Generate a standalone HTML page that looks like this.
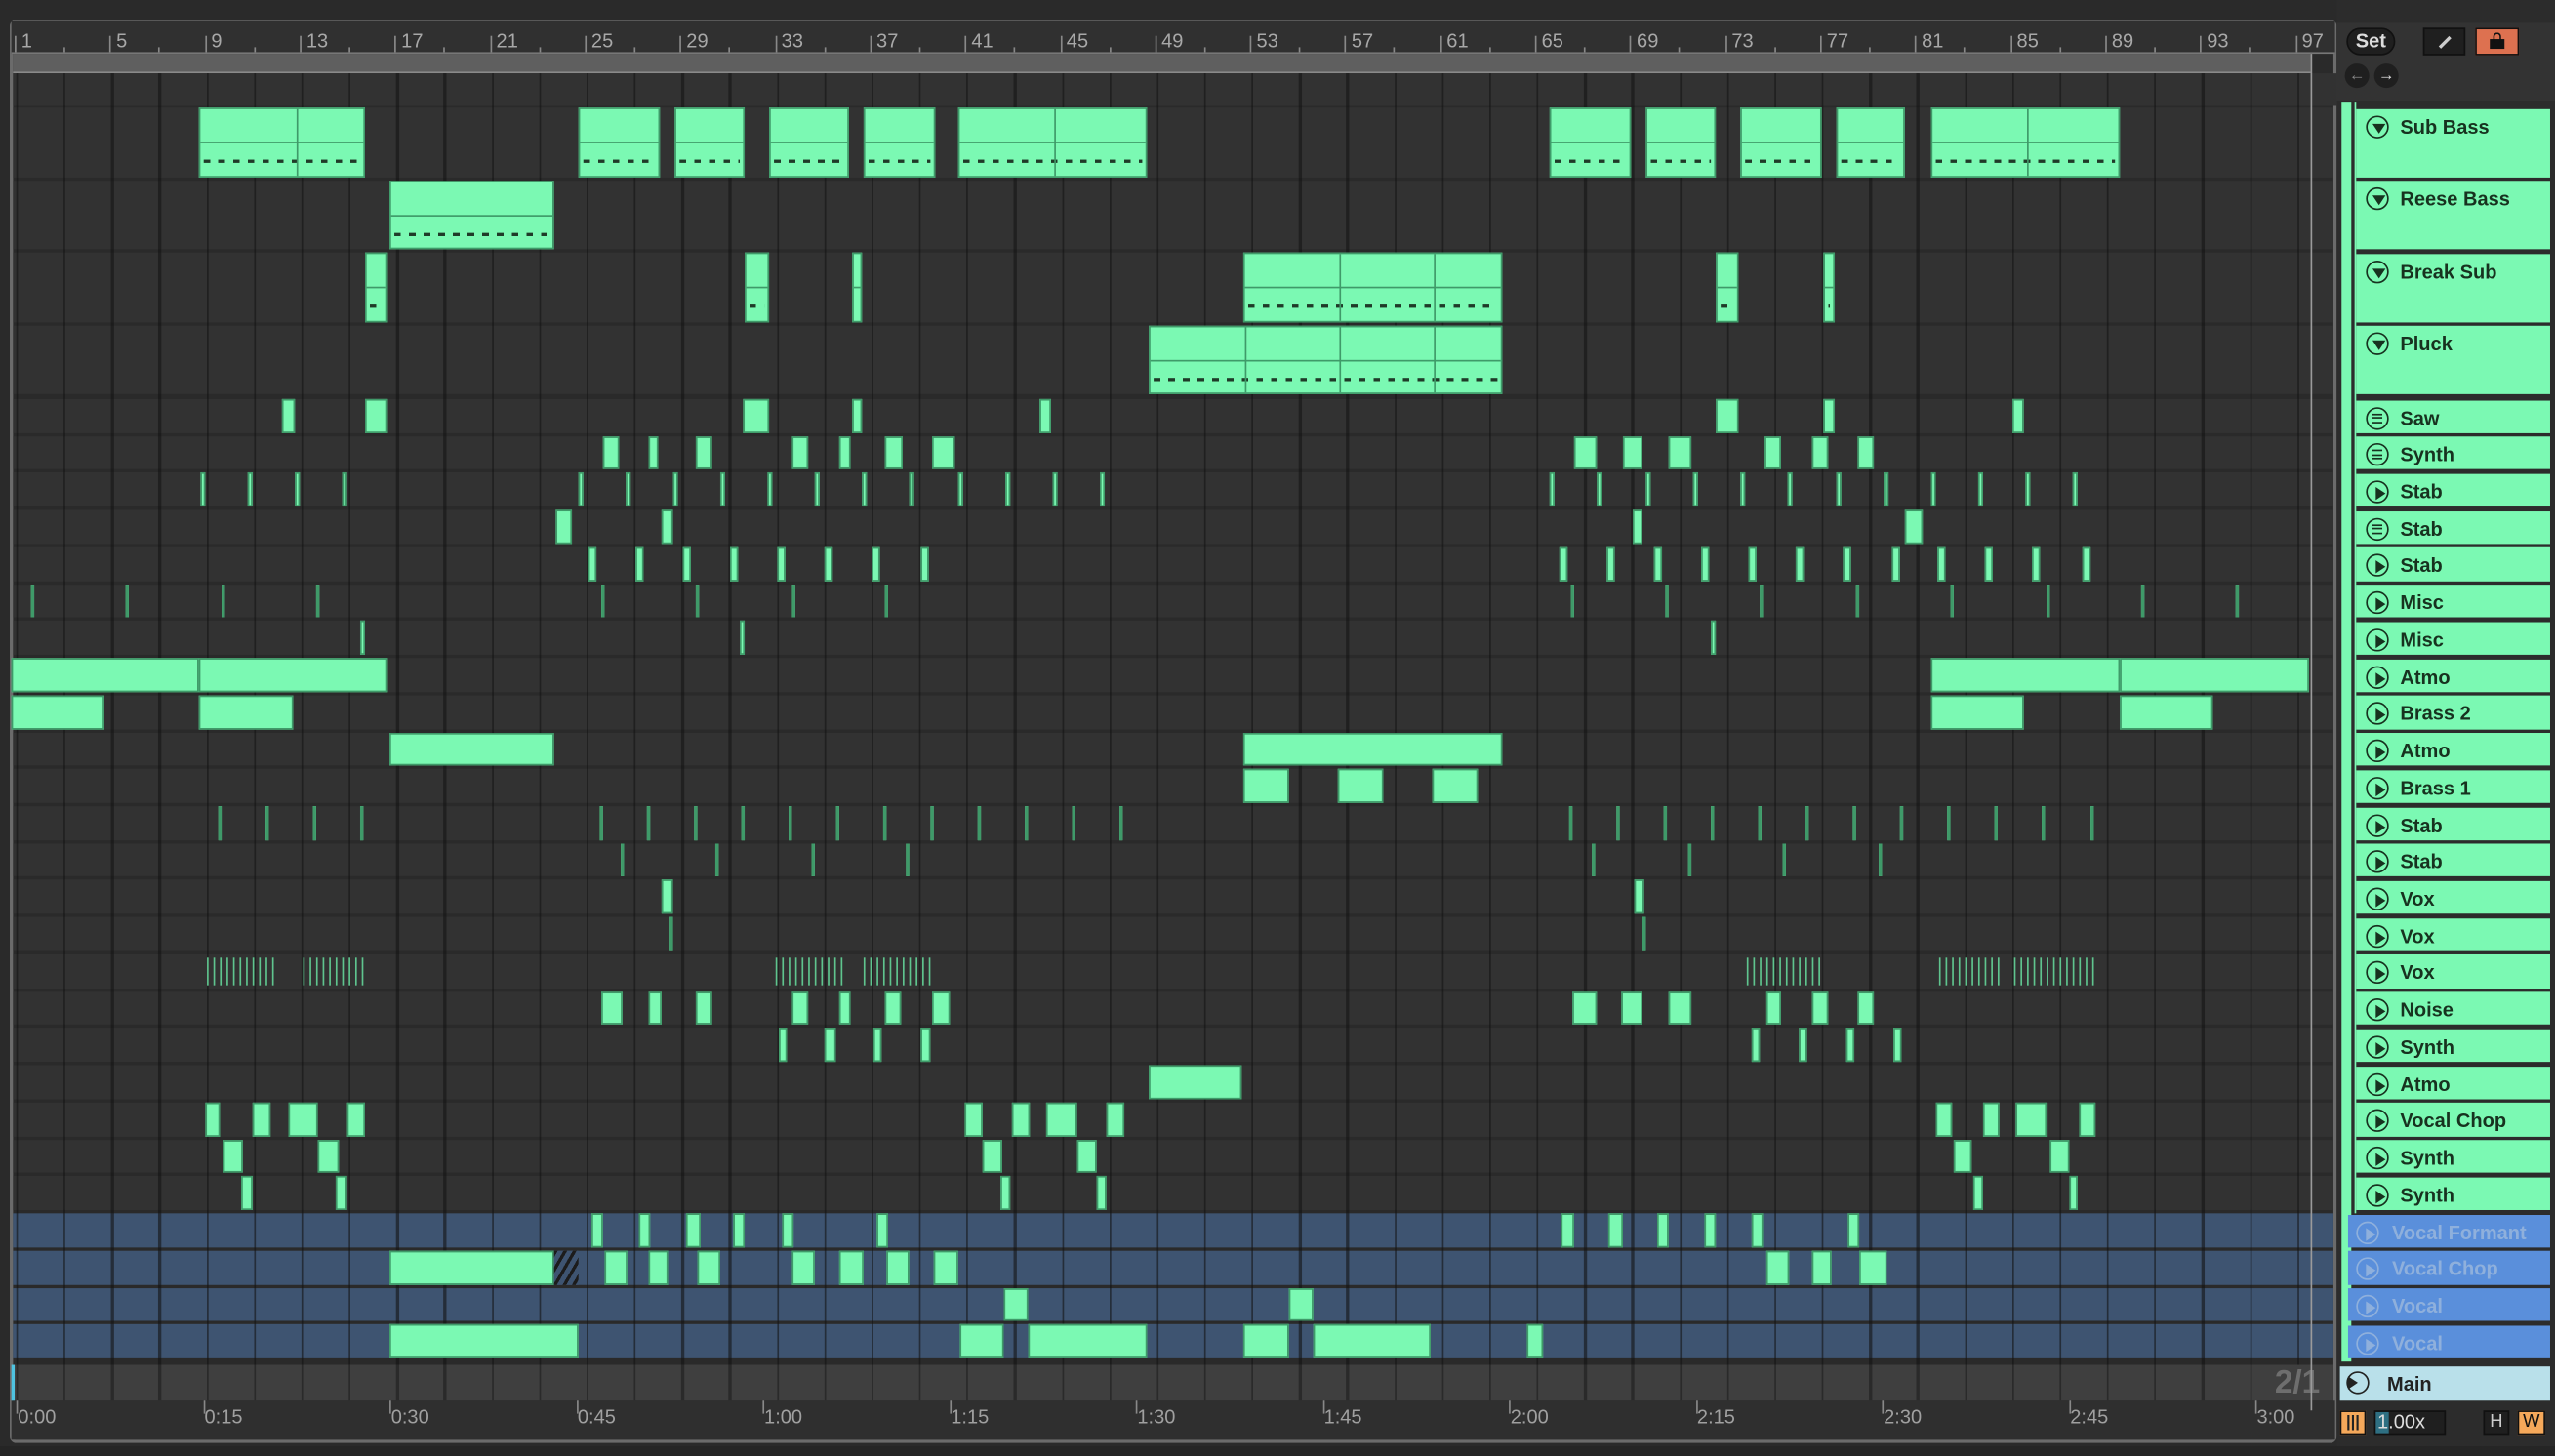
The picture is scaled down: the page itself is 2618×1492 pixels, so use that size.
<!DOCTYPE html>
<html><head><meta charset="utf-8">
<style>
*{margin:0;padding:0;box-sizing:border-box}
html,body{width:2618px;height:1492px;overflow:hidden;background:#2a2a2a;font-family:"Liberation Sans","DejaVu Sans",sans-serif}
#w{position:absolute;left:0;top:0;width:1568px;height:894px;transform-origin:0 0;transform:scale(1.66964,1.66890);background:#2a2a2a}
.a{position:absolute}
.c{position:absolute;background:#7bf9b3;border:1px solid #3f9a69}
.h{position:absolute;left:1446px;width:119px;background:#7bf9b3;color:#17321f;font-weight:bold;font-size:12px}
.h .i{position:absolute;left:6px;top:4px;width:14px;height:14px;border:1.5px solid #17321f;border-radius:50%}
.h span{position:absolute;left:27px;top:4px}
.v{background:#5a8fdb;color:#8fb0dc}
.v .i{border-color:#8fb0dc}
.num{position:absolute;top:18px;font-size:12px;color:#a8a8a8}
.tm{position:absolute;top:863px;font-size:12px;color:#a0a0a0}
</style></head><body>
<div id="w">
<!-- frame -->
<div class="a" style="left:6px;top:12px;width:1428px;height:874px;border:2px solid #6b6b6b;border-radius:4px"></div>
<div class="a" style="left:7px;top:13px;width:1426px;height:20px;background:#303030"></div>
<div class="a" style="left:7px;top:32px;width:1426px;height:1px;background:#777"></div>
<div class="a" style="left:8px;top:33px;width:1410px;height:12px;background:#5f5f5f;border-bottom:1px solid #8a8a8a"></div>
<div class="a" style="left:8px;top:45px;width:1426px;height:20px;background:#323232"></div>
<div id="grid" class="a" style="left:8px;top:45px;width:1424px;height:815px"></div>
<div id="nums"></div>
<div id="rows"></div>
<div id="clips"></div>
<!-- bottom main lane -->
<div class="a" style="left:8px;top:838px;width:1424px;height:22px;background:#3f3f3f"></div>
<div class="a" style="left:1396px;top:838px;font-size:20px;font-weight:bold;color:#6e6e6e">2/1</div>
<div id="bgrid"></div>
<div class="a" style="left:7px;top:860px;width:1426px;height:24px;background:#2f2f2f"></div>
<div id="times"></div>
<div class="a" style="left:1418px;top:33px;width:1px;height:833px;background:#9a9a9a"></div>
<div class="a" style="left:7px;top:838px;width:2px;height:22px;background:#4fc3e0"></div>
<!-- right panel -->
<div class="a" style="left:1434px;top:0;width:134px;height:894px;background:#2c2c2c"></div>
<div class="a" style="left:1434px;top:14px;width:134px;height:48px;background:#333"></div>
<div class="a" style="left:1440px;top:17px;width:30px;height:17px;border-radius:9px;background:#1f1f1f;border:1px solid #111;color:#ddd;font-size:12px;font-weight:bold;text-align:center;line-height:15px">Set</div>
<div class="a" style="left:1487px;top:17px;width:26px;height:17px;background:#1f1f1f;border:1px solid #111"></div>
<div class="a" style="left:1496px;top:25px;width:9px;height:2px;background:#ccc;transform:rotate(-45deg)"></div>
<div class="a" style="left:1519px;top:17px;width:27px;height:17px;background:#dd7150;border:1px solid #111"></div>
<div class="a" style="left:1528px;top:24px;width:9px;height:6px;background:#111"></div>
<div class="a" style="left:1530px;top:20px;width:5px;height:6px;border:1.5px solid #111;border-bottom:none;border-radius:3px 3px 0 0"></div>
<div class="a" style="left:1439px;top:39px;width:15px;height:15px;border-radius:50%;background:#1f1f1f;color:#888;font-size:10px;text-align:center;line-height:15px">&#8592;</div>
<div class="a" style="left:1457px;top:39px;width:15px;height:15px;border-radius:50%;background:#1f1f1f;color:#ddd;font-size:10px;text-align:center;line-height:15px">&#8594;</div>
<div class="a" style="left:1437px;top:63px;width:6px;height:773px;background:#7bf9b3"></div>
<div class="a" style="left:1445px;top:63px;width:1px;height:682px;background:#7bf9b3"></div>
<div id="heads"></div>
<div class="h" style="left:1436px;width:129px;top:839px;height:21px;background:#b9e0ea;color:#222"><div class="i" style="left:4px;top:3px;border-color:#222"></div><span style="left:29px">Main</span></div>
<div class="a" style="left:1441px;top:845px;width:0;height:0;border-left:6px solid #222;border-top:4px solid transparent;border-bottom:4px solid transparent"></div>
<div class="a" style="left:1436px;top:866px;width:16px;height:15px;background:#f5a85a;border:1px solid #111;color:#222;font-size:10px;text-align:center;line-height:13px;font-weight:bold">|||</div>
<div class="a" style="left:1457px;top:866px;width:44px;height:15px;background:#1f1f1f;border:1px solid #111"></div>
<div class="a" style="left:1458px;top:867px;width:8px;height:13px;background:#2e6f82"></div>
<div class="a" style="left:1459px;top:866px;font-size:12px;color:#ddd;line-height:15px">1.00x</div>
<div class="a" style="left:1524px;top:866px;width:16px;height:15px;background:#1f1f1f;border:1px solid #111;color:#ccc;font-size:11px;text-align:center;line-height:13px">H</div>
<div class="a" style="left:1545px;top:866px;width:17px;height:15px;background:#f5a85a;border:1px solid #111;color:#111;font-size:11px;text-align:center;line-height:13px">W</div>
<div class="a" style="left:0;top:888px;width:1568px;height:6px;background:#252525"></div>
</div>
<script>
var W=document.getElementById('w');
function add(p,html){var d=document.getElementById(p);d.insertAdjacentHTML('beforeend',html);}
// rows
var rows=[];var y=65;for(var i=0;i<4;i++){rows.push([y,44.5]);y+=44.5;}
y=244;for(var i=0;i<26;i++){rows.push([y,22.73]);y+=22.73;}
var s='';
rows.forEach(function(r,i){var blue=i>=26;
 s+='<div class="a" style="left:8px;top:'+(r[0]+1)+'px;width:1424px;height:'+(r[1]-2)+'px;background:'+(blue?'#3e5471':'#323232')+'"></div>';});
add('rows',s);
// vertical gridlines
s='';for(var b=1;b<=99;b+=2){var x=10+(b-1)*14.58;if(x>1432)break;
 s+='<div class="a" style="left:'+x+'px;top:45px;width:1.3px;height:815px;background:rgba(20,20,20,.6)"></div>';}
document.getElementById('clips').insertAdjacentHTML('beforebegin','<div id="vl">'+s+'</div>');
// numbers
s='';for(var b=1;b<=97;b+=4){var x=10+(b-1)*14.58;s+='<div class="a" style="left:'+(x-1)+'px;top:22px;width:1px;height:10px;background:#888"></div><div class="num" style="left:'+(x+3)+'px">'+b+'</div>';
 s+='<div class="a" style="left:'+(x+29)+'px;top:29px;width:1px;height:3px;background:#888"></div>';}
add('nums',s);
// times
var tl=['0:00','0:15','0:30','0:45','1:00','1:15','1:30','1:45','2:00','2:15','2:30','2:45','3:00'];
s='';tl.forEach(function(t,i){var x=8+i*114.5;s+='<div class="a" style="left:'+(x+2)+'px;top:860px;width:1px;height:8px;background:#888"></div><div class="tm" style="left:'+(x+3)+'px">'+t+'</div>';});
add('times',s);
// clips
function big(ri,a,b,divs){var r=rows[ri];var h='<div class="c" style="left:'+a+'px;top:'+(r[0]+1)+'px;width:'+(b-a)+'px;height:'+(r[1]-2)+'px;background:#7bf9b3">';
 h+='<div class="a" style="left:0;right:0;top:'+(r[1]*0.45)+'px;height:1px;background:#3f9a69"></div>';
 h+='<div class="a" style="left:2px;right:2px;top:'+(r[1]*0.7)+'px;height:2px;background:repeating-linear-gradient(90deg,#1f3a28 0 4px,transparent 4px 9px)"></div>';
 (divs||[]).forEach(function(d){h+='<div class="a" style="left:'+(d-a)+'px;top:0;width:1px;height:100%;background:#3f9a69"></div>';});
 return h+'</div>';}
function cl(ri,a,b){var r=rows[ri];return '<div class="c" style="left:'+a+'px;top:'+(r[0]+1)+'px;width:'+Math.max(b-a,2)+'px;height:'+(r[1]-2)+'px"></div>';}
s='';
[[122,224,[181]],[355,405],[414,457],[472,521],[530,574],[588,704,[646]],[951,1001],[1010,1053],[1068,1118],[1127,1169],[1185,1301,[1243]]].forEach(function(c){s+=big(0,c[0],c[1],c[2]);});
s+=big(1,239,340);
[[224,238],[457,472],[523,529],[763,922,[821,879]],[1053,1067],[1119,1126]].forEach(function(c){s+=big(2,c[0],c[1],c[2]);});
s+=big(3,705,922,[763,821,879]);
function R(ri,list){list.forEach(function(c){s+=cl(ri,c[0],c[1]);});}
function T(ri,xs,w){xs.forEach(function(x){s+=cl(ri,x,x+w);});}
R(4,[[173,181],[224,238],[456,472],[523,529],[638,645],[1053,1067],[1119,1126],[1235,1242]]);
R(5,[[370,380],[398,404],[427,437],[486,496],[515,522],[543,554],[572,586],[966,980],[996,1008],[1024,1038],[1083,1093],[1112,1122],[1140,1150]]);
T(6,[123,152,181,210,355,384,413,442,471,500,529,558,588,617,646,675,951,980,1010,1039,1068,1097,1127,1156,1185,1214,1243,1272],3);
R(7,[[341,351],[406,413],[1002,1008],[1169,1180]]);
T(8,[361,390,419,448,477,506,535,565,957,986,1015,1044,1073,1102,1131,1161,1189,1218,1247,1278],5);
T(9,[19,77,136,194,369,427,486,543,964,1022,1080,1139,1197,1256,1314,1372],2);
T(10,[221,454,1050],3);
R(11,[[7,122],[122,238],[1185,1301],[1301,1417]]);
R(12,[[7,64],[122,180],[1185,1242],[1301,1358]]);
R(13,[[239,340],[763,922]]);
R(14,[[763,791],[821,849],[879,907]]);
T(15,[134,163,192,221,368,397,426,455,484,513,542,571,600,629,658,687,963,992,1021,1050,1079,1108,1137,1166,1195,1224,1253,1283],2);
T(16,[381,439,498,556,977,1036,1094,1153],2);
R(17,[[406,413],[1003,1009]]);
T(18,[411,1008],2);
var xs=[];[[127,170],[186,224],[476,520],[530,574],[1072,1118],[1190,1228],[1236,1285]].forEach(function(g){for(var x=g[0];x<g[1];x+=4)xs.push(x);});
xs.forEach(function(x){var r=rows[19];s+='<div class="a" style="left:'+x+'px;top:'+(r[0]+3)+'px;width:1px;height:'+(r[1]-6)+'px;background:#5fc48e"></div>';});
R(20,[[369,382],[398,406],[427,437],[486,496],[515,522],[543,553],[572,583],[965,980],[995,1008],[1024,1038],[1084,1093],[1112,1122],[1140,1150]]);
R(21,[[478,483],[506,513],[536,541],[565,571],[1075,1080],[1104,1109],[1133,1138],[1162,1167]]);
R(22,[[705,762]]);
R(23,[[126,135],[155,166],[177,195],[213,224],[592,603],[621,632],[642,661],[679,690],[1188,1198],[1217,1227],[1237,1256],[1276,1286]]);
R(24,[[137,149],[195,208],[603,615],[661,673],[1199,1210],[1258,1270]]);
R(25,[[148,155],[206,213],[614,620],[673,679],[1211,1217],[1270,1275]]);
R(26,[[363,370],[392,399],[421,430],[450,457],[480,487],[538,545],[958,966],[987,996],[1017,1024],[1046,1053],[1075,1082],[1134,1141]]);
R(27,[[239,340],[371,385],[398,410],[428,442],[486,500],[515,530],[544,558],[573,588],[1084,1098],[1112,1124],[1141,1158]]);
(function(){var r=rows[27];s+='<div class="a" style="left:340px;top:'+(r[0]+1)+'px;width:15px;height:'+(r[1]-2)+'px;background:repeating-linear-gradient(120deg,#1c1c1c 0 2px,#3e5471 2px 5px)"></div>';})();
R(28,[[616,631],[791,806]]);
R(29,[[239,355],[589,616],[631,704],[763,791],[806,878],[937,947]]);
add('clips',s);
// bottom grid
s='';for(var b=1;b<=99;b+=2){var x=10+(b-1)*14.58;if(x>1400)break;s+='<div class="a" style="left:'+x+'px;top:838px;width:1.3px;height:22px;background:#2a2a2a"></div>';}
add('bgrid',s);
// headers
var names=[['Sub Bass','d'],['Reese Bass','d'],['Break Sub','d'],['Pluck','d'],['Saw','m'],['Synth','m'],['Stab','p'],['Stab','m'],['Stab','p'],['Misc','p'],['Misc','p'],['Atmo','p'],['Brass 2','p'],['Atmo','p'],['Brass 1','p'],['Stab','p'],['Stab','p'],['Vox','p'],['Vox','p'],['Vox','p'],['Noise','p'],['Synth','p'],['Atmo','p'],['Vocal Chop','p'],['Synth','p'],['Synth','p'],['Vocal Formant','p'],['Vocal Chop','p'],['Vocal','p'],['Vocal','p']];
s='';names.forEach(function(n,i){var r=rows[i];var v=i>=26;var col=v?'#8fb0dc':'#17321f';
 var g='';if(n[1]=='d')g='<div class="a" style="left:3px;top:4px;width:0;height:0;border-top:6px solid '+col+';border-left:4px solid transparent;border-right:4px solid transparent"></div>';
 else if(n[1]=='m')g='<div class="a" style="left:3px;top:3px;width:6px;height:6px;border-top:1px solid '+col+';border-bottom:1px solid '+col+'"></div><div class="a" style="left:3px;top:5.5px;width:6px;height:1px;background:'+col+'"></div>';
 else g='<div class="a" style="left:4.5px;top:3px;width:0;height:0;border-left:6px solid '+col+';border-top:4px solid transparent;border-bottom:4px solid transparent"></div>';
 s+='<div class="h'+(v?' v':'')+'" style="top:'+(r[0]+1.5)+'px;height:'+(r[1]-2.5)+'px;'+(v?'left:1441px;width:124px':'')+'"><div class="i" style="'+(v?'left:5px':'')+'">'+g+'</div><span>'+n[0]+'</span></div>';});
add('heads',s);
</script>
</body></html>
